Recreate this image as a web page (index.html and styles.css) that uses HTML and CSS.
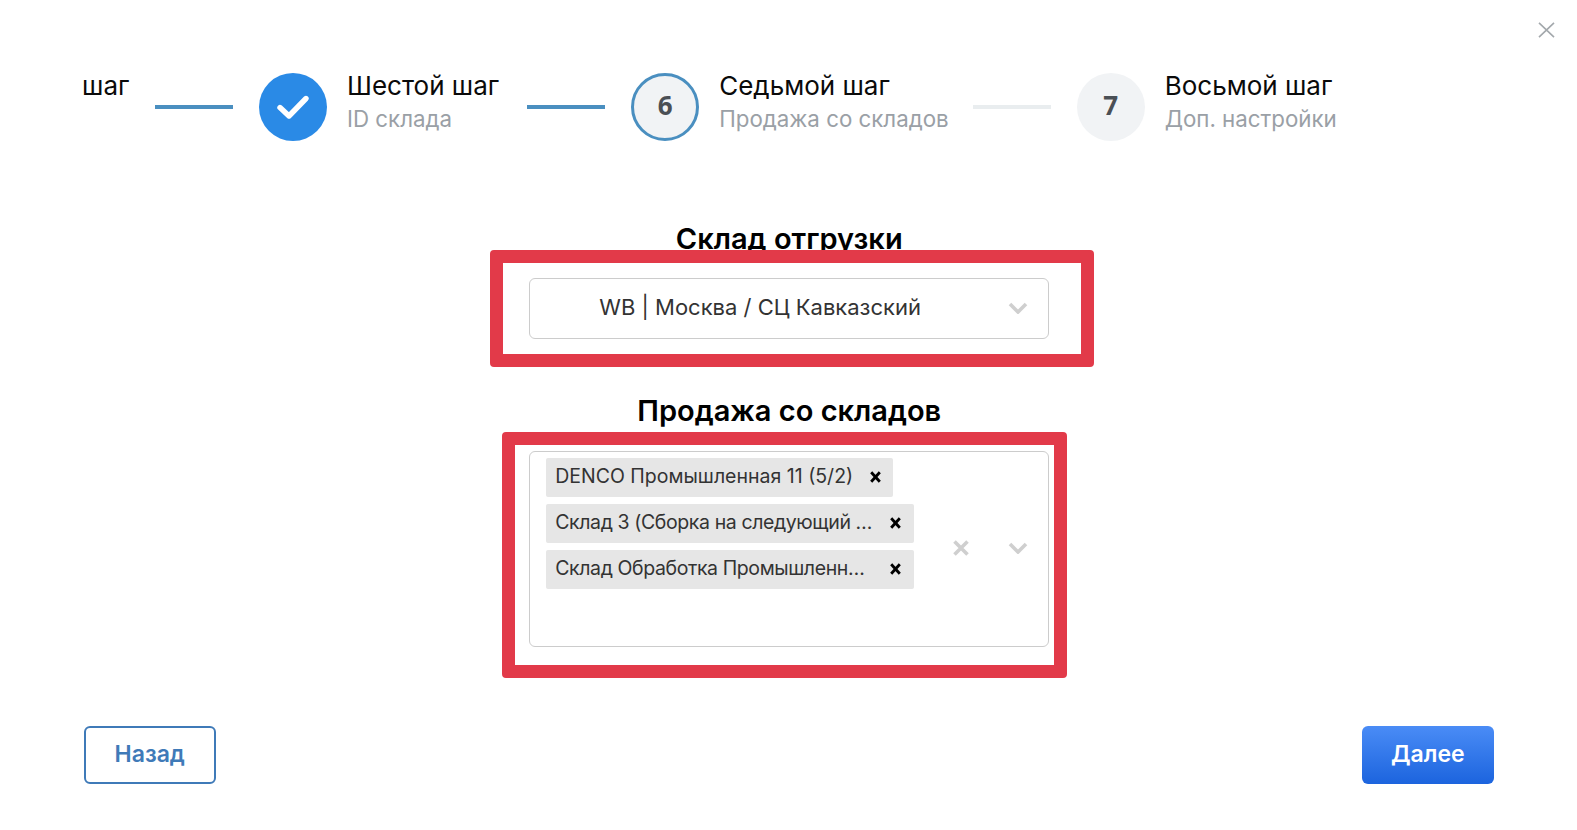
FILE: index.html
```html
<!DOCTYPE html>
<html lang="ru">
<head>
<meta charset="utf-8">
<title>Продажа со складов</title>
<link rel="stylesheet" href="styles.css">
</head>
<body>
<main class="page">
  <button class="close" aria-label="Закрыть">
    <svg viewBox="0 0 17 16" width="17" height="16"><path d="M1 .8 16 15.2M16 .8 1 15.2" fill="none" stroke="#a3a8ac" stroke-width="1.6"/></svg>
  </button>
  <nav class="stepper">
    <div class="step-title cut">шаг</div>
    <span class="connector done"></span>
    <div class="step">
      <span class="circle filled">
        <svg viewBox="0 0 34 28" width="34" height="28"><path d="M4 14.5 13 23 30 5.5" fill="none" stroke="#fff" stroke-width="5.4" stroke-linecap="round" stroke-linejoin="round"/></svg>
      </span>
      <div class="labels"><div class="step-title">Шестой шаг</div><div class="step-sub">ID склада</div></div>
    </div>
    <span class="connector done after-short"></span>
    <div class="step">
      <span class="circle current">6</span>
      <div class="labels"><div class="step-title">Седьмой шаг</div><div class="step-sub">Продажа со складов</div></div>
    </div>
    <span class="connector after-long"></span>
    <div class="step">
      <span class="circle">7</span>
      <div class="labels"><div class="step-title">Восьмой шаг</div><div class="step-sub">Доп. настройки</div></div>
    </div>
  </nav>

  <section class="form">
    <h2 class="heading first">Склад отгрузки</h2>
    <div class="field">
      <div class="select single">
        <span class="value">WB | Москва / СЦ Кавказский</span>
        <svg class="chev" viewBox="0 0 20 12" width="20" height="12"><path d="M2 2 10 10 18 2" fill="none" stroke="#cfcfcf" stroke-width="3.6"/></svg>
      </div>
      <div class="mark mark-a"></div>
    </div>

    <h2 class="heading second">Продажа со складов</h2>
    <div class="field">
      <div class="select multi">
        <div class="chips">
          <div class="chip"><span class="chip-text">DENCO Промышленная 11 (5/2)</span><svg class="chip-x" viewBox="0 0 11 12" width="11" height="12"><path d="M1.2 1.2 9.8 10.8M9.8 1.2 1.2 10.8" stroke="#000" stroke-width="2.8" fill="none"/></svg></div>
          <div class="chip wide"><span class="chip-text">Склад 3 (Сборка на следующий …</span><svg class="chip-x" viewBox="0 0 11 12" width="11" height="12"><path d="M1.2 1.2 9.8 10.8M9.8 1.2 1.2 10.8" stroke="#000" stroke-width="2.8" fill="none"/></svg></div>
          <div class="chip wide"><span class="chip-text">Склад Обработка Промышленн…</span><svg class="chip-x" viewBox="0 0 11 12" width="11" height="12"><path d="M1.2 1.2 9.8 10.8M9.8 1.2 1.2 10.8" stroke="#000" stroke-width="2.8" fill="none"/></svg></div>
        </div>
        <svg class="clear" viewBox="0 0 16 16" width="16" height="16"><path d="M1.5 1.5 14.5 14.5M14.5 1.5 1.5 14.5" fill="none" stroke="#cfcfcf" stroke-width="3.6"/></svg>
        <svg class="chev" viewBox="0 0 20 12" width="20" height="12"><path d="M2 2 10 10 18 2" fill="none" stroke="#cfcfcf" stroke-width="3.6"/></svg>
      </div>
      <div class="mark mark-b"></div>
    </div>
  </section>

  <footer class="actions">
    <button class="btn back">Назад</button>
    <button class="btn next">Далее</button>
  </footer>
</main>
</body>
</html>
```
FILE: styles.css
```css
* { box-sizing: border-box; }
html, body { margin: 0; padding: 0; background: #fff; }
body { font-family: "Inter", "Noto Sans", sans-serif; color: #000; overflow: hidden; }
.page { position: relative; width: 1577px; height: 830px; padding: 73px 83.5px 0 82px; display: flex; flex-direction: column; }
.close { position: absolute; top: 22px; left: 1538px; padding: 0; border: 0; background: none; line-height: 0; }

.stepper { display: flex; align-items: center; height: 68px; }
.step { display: flex; align-items: center; gap: 20px; }
.labels { display: flex; flex-direction: column; padding-bottom: 10px; }
.step-title { font-size: 26px; line-height: 33px; color: #0a0a0a; white-space: nowrap; }
.step-sub { font-size: 22.3px; line-height: 33px; color: #9aa0a6; white-space: nowrap; }
.cut { width: 47px; flex: none; margin-top: -44px; }
.connector { width: 78px; height: 4px; margin: 0 26px; background: #e9edef; flex: none; }
.connector.done { background: #4a8fc0; }
.connector.after-short { margin-left: 28px; }
.connector.after-long { margin-left: 24px; }
.circle { width: 68px; height: 68px; flex: none; border-radius: 50%; background: #f1f3f5; color: #4a4f55; font: 700 26px "Noto Sans", sans-serif; padding-bottom: 4px; display: flex; align-items: center; justify-content: center; }
.circle.filled { background: #2a8ae6; padding-bottom: 0; }
.circle.current { border: 3px solid #4a8fc0; }

.form { display: flex; flex-direction: column; align-items: center; padding-left: 3px; }
.heading { margin: 0 0 22px; font-size: 29px; line-height: 36px; font-weight: 600; text-align: center; color: #000; }
.heading.first { margin-top: 79.5px; margin-bottom: 21px; }
.heading.second { margin-top: 54px; }
.field { position: relative; width: 520px; }
.select { border: 1.5px solid #cccccc; border-radius: 6px; background: #fff; display: flex; align-items: center; }
.single { height: 61px; padding: 0 20px 0 69px; justify-content: space-between; }
.value { font-size: 22px; color: #333; margin-bottom: 3px; }
.multi { height: 196px; padding: 6px 11px 0 16px; }
.chips { width: 368px; height: 100%; display: flex; flex-direction: column; align-items: flex-start; gap: 6.5px; }
.chip { height: 39.5px; display: flex; align-items: center; padding: 0 12px 0 9px; background: #e6e6e6; border-radius: 2px; }
.chip.wide { width: 368px; padding-right: 13px; }
.chip-text { flex: 1; min-width: 0; overflow: hidden; font-size: 19.5px; line-height: 26px; color: #333; white-space: nowrap; margin: 0 17px 2px 0; }
.chip.wide .chip-text { letter-spacing: -0.4px; }
.chip-x { flex: none; }
.clear { margin-left: 38.5px; margin-top: -8px; }
.multi .chev { margin-left: 39px; margin-top: -8px; }
.mark { position: absolute; border: 13px solid #e23a49; border-radius: 4px; pointer-events: none; }
.mark-a { top: -28px; bottom: -28px; left: -39.5px; right: -45px; }
.mark-b { top: -18.5px; bottom: -31px; left: -27px; right: -18px; }

.actions { display: flex; justify-content: space-between; margin-top: auto; margin-bottom: 46px; padding-left: 2px; }
.btn { width: 131.5px; height: 58px; padding: 0 0 2px; border-radius: 6px; font: 600 23px "Inter", "Noto Sans", sans-serif; }
.back { border: 2px solid #3f7ab8; background: #fff; color: #3f7ab8; }
.next { border: 0; color: #fff; background: linear-gradient(#4a8cf6, #1c64de); }
```
